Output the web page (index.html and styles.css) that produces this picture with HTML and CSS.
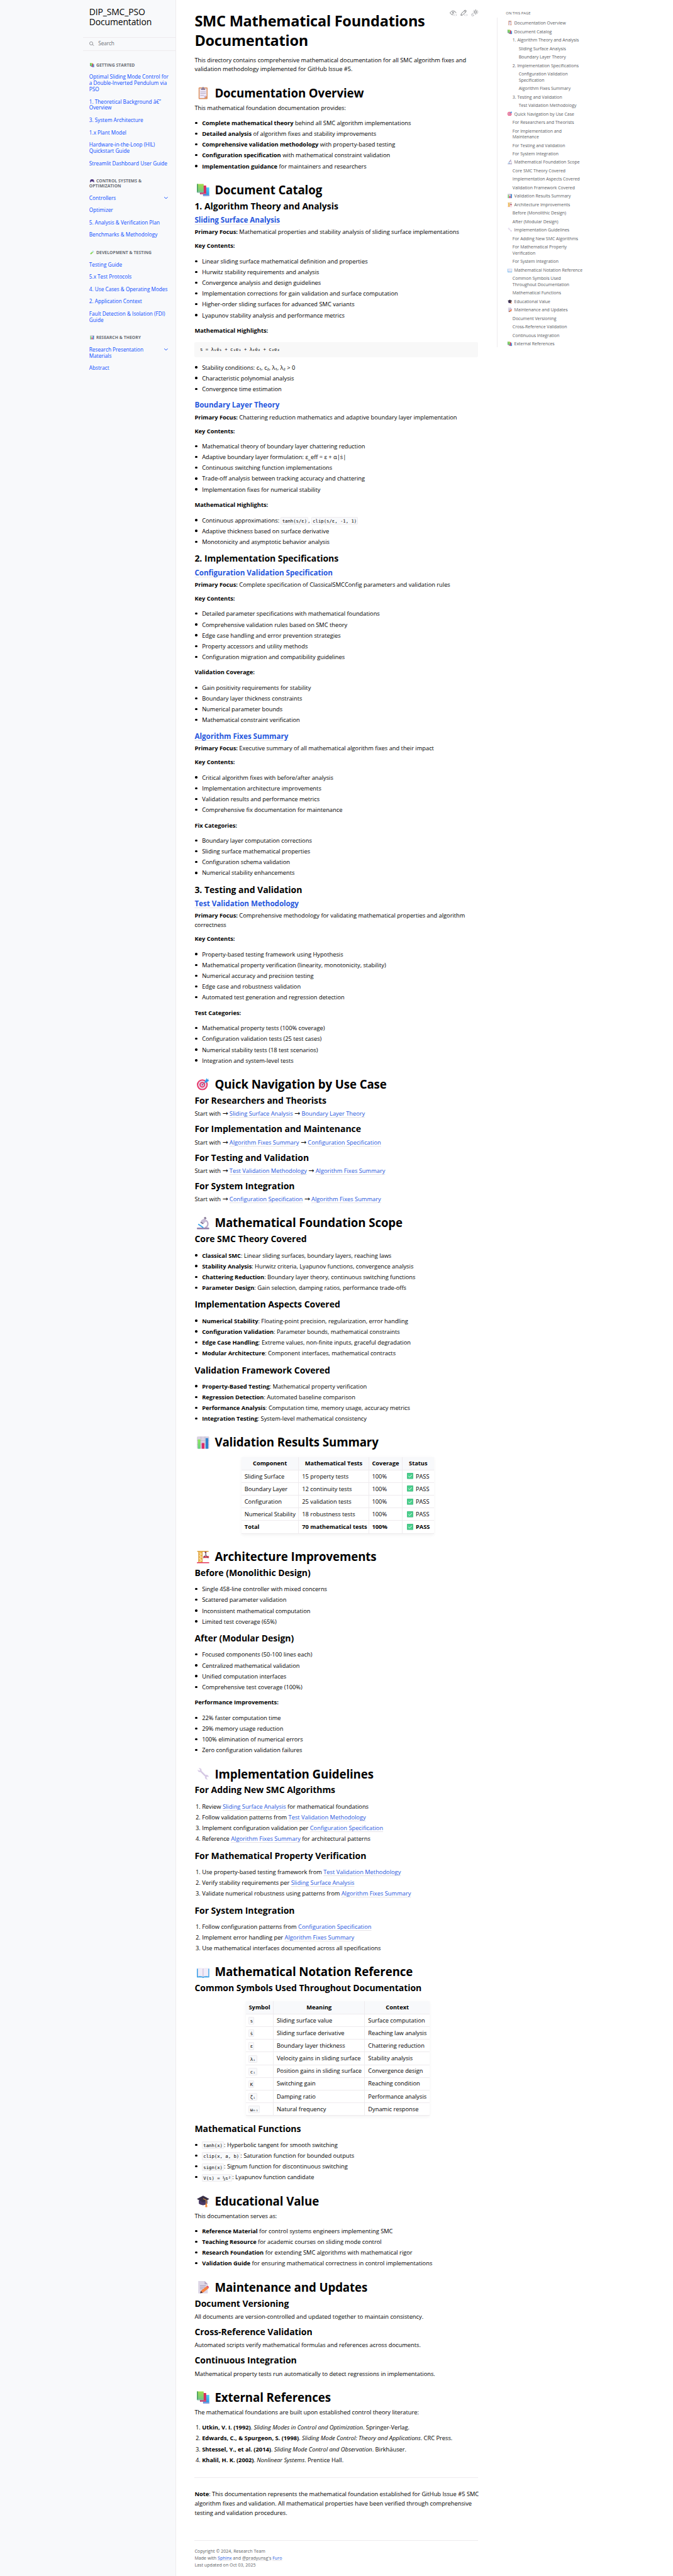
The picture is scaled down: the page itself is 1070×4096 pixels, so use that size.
FILE: index.html
```html
<!DOCTYPE html>
<html lang="en">
<head>
<meta charset="utf-8">
<title>SMC Mathematical Foundations Documentation - DIP_SMC_PSO Documentation</title>
<link rel="stylesheet" href="styles.css">
</head>
<body>
<svg class="sprite" width="0" height="0" aria-hidden="true">
  <defs>
    <linearGradient id="g-green" x1="0" y1="0" x2="0" y2="1"><stop offset="0" stop-color="#a5dc4e"/><stop offset="1" stop-color="#6cc58c"/></linearGradient>
    <linearGradient id="g-blue" x1="0" y1="0" x2="0" y2="1"><stop offset="0" stop-color="#4fd0fb"/><stop offset="1" stop-color="#2a8fe0"/></linearGradient>
    <linearGradient id="g-lime" x1="0" y1="0" x2="0" y2="1"><stop offset="0" stop-color="#8fe85a"/><stop offset="1" stop-color="#5fd07a"/></linearGradient>
  </defs>
  <symbol id="clipboard" viewBox="0 0 32 32">
    <rect x="4.500" y="1.500" width="23" height="30.500" rx="2" fill="#dd9160"/>
    <path d="M7 4h18v19l-6 6H7z" fill="#eee8f7"/><path d="M25 23l-6 6v-6z" fill="#c5b4d6"/>
    <path d="M10.500 4.500h11V7a1 1 0 0 1-1 1h-9a1 1 0 0 1-1-1zM13.500 5V3a2.500 2.500 0 0 1 5 0v2z" fill="#8d7d99"/>
    <path d="M9 13h14M9 17h14M9 22h9" stroke="#a899b8" stroke-width="1.200"/>
  </symbol>
  <symbol id="books" viewBox="0 -1 32 32">
    <rect x="16" y="8.500" width="16" height="22.500" rx="1" fill="url(#g-blue)"/><path d="M15.500 28.500H32V31H17z" fill="#6a6fd0"/><path d="M17 29.500h15" stroke="#e8e4f8" stroke-width="1"/>
    <rect x="8" y="4" width="16" height="22.500" rx="1" fill="#dc2a60"/><path d="M7.500 24H24v2.500H9z" fill="#a51f60"/><path d="M9 24.800h15" stroke="#f3dcea" stroke-width="1"/>
    <rect x="0" y="0" width="17.500" height="22" rx="1" fill="url(#g-green)"/><path d="M0 0h3v20H0z" fill="#4fa564"/><path d="M.5 19.800h17V22H1z" fill="#3f8d72"/><path d="M1.500 20.500h16" stroke="#e6f2ea" stroke-width="1"/>
  </symbol>
  <symbol id="dart" viewBox="0 0 32 32">
    <circle cx="14" cy="17.500" r="14" fill="#e83c6c"/><circle cx="14" cy="17.500" r="10.600" fill="#e8dff2"/><circle cx="14" cy="17.500" r="7.500" fill="#e83c6c"/><circle cx="14" cy="17.500" r="4.300" fill="#ddd2ea"/><circle cx="14" cy="17.500" r="1.800" fill="#b02a5c"/>
    <path d="M14 17.500L24 8" stroke="#7a6a9c" stroke-width="1.600"/><path d="M19.500 9.500L25.500.5l2 4 4.500 2-8.500 6.500z" fill="#3aa5ee"/><path d="M20 12.500L30 3" stroke="#2374c4" stroke-width="1.200"/>
  </symbol>
  <symbol id="microscope" viewBox="0 0 32 32">
    <path d="M22 8.500c9 4 8 16-1 19" fill="none" stroke="#bcaecb" stroke-width="3.800"/>
    <rect x="0" y="27.500" width="32" height="4.500" rx="2" fill="#9280ab"/>
    <path d="M3.500 18.500l13 9" stroke="#39a5ee" stroke-width="3"/>
    <path d="M12 8l9-5 4 7.500-9 7.500c-5 0-8-4-4-10z" fill="#c9bdd6"/><path d="M9.500 13.500l7 4" stroke="#75668a" stroke-width="2.400"/><path d="M18 1.500l4-2 3 4.500-4.500 2z" fill="#877a97"/>
  </symbol>
  <symbol id="chart" viewBox="0 0 32 32">
    <rect width="32" height="32" rx="3" fill="#d9d2e2"/><path d="M0 10.500h32M0 21h32M10.500 0v32M21 0v32" stroke="#b7aec2" stroke-width=".8"/>
    <rect x="2.500" y="7.500" width="6.500" height="24.500" rx="1" fill="url(#g-lime)"/><rect x="12.500" y="17" width="6.800" height="15" rx="1" fill="#dc2a68"/><rect x="22.500" y="4.500" width="6.800" height="27.500" rx="1" fill="#2f83cf"/>
  </symbol>
  <symbol id="crane" viewBox="0 0 32 32">
    <rect x="0" y="29" width="32" height="3" rx="1" fill="#e63a5c"/>
    <path d="M1 1.300h29" stroke="#dba23c" stroke-width="2.400"/><path d="M4 2h10.500v27H4z" fill="#f0b94c"/>
    <path d="M6 5l6.500 3L6 12l6.500 4L6 20l6.500 4L6 28" fill="none" stroke="#fff2d0" stroke-width="1.600"/><path d="M4.800 2v27M13.700 2v27" stroke="#c98a30" stroke-width="1.200"/>
    <path d="M20 2h5l-1 4h-3z" fill="#8c3a52"/><path d="M16.500 13.500h14.500v4.500H16.500z" fill="#de3f51"/><path d="M23 5v4.500l-6 9M23 9.500l6 9" stroke="#4b4258" stroke-width="1.600" fill="none"/>
  </symbol>
  <symbol id="wrench" viewBox="0 0 32 32">
    <path d="M2 5c0 5 4 7 8 5.500l11 11c-1.500 5 1.500 9 7 8.500l-3.500-4.500 2-3 4 1c0-4-4-7-8-5.500L12 7.500C13 3 9.500-.5 4.500.5l4 4-1.800 3z" fill="#d8cbe6"/><path d="M10 10.500l11 11" stroke="#bfb0d2" stroke-width="1.200"/>
  </symbol>
  <symbol id="book" viewBox="0 0 32 32">
    <path d="M0 7h32v22.500H18.500L16 31l-2.500-1.500H0z" fill="#3aa0e6"/><path d="M2.500 5.500C8 4.500 13 5 16 6.500c3-1.500 8-2 13.500-1V27c-5-1-10-1-13.500.8C12.500 26 7.500 26 2.500 27z" fill="#f1ecf8"/><path d="M16 6.500v21" stroke="#c2b2d4" stroke-width="1.600"/>
  </symbol>
  <symbol id="cap" viewBox="0 0 32 32">
    <path d="M5 14h22v8c-4 6-18 6-22 0z" fill="#4a3a66"/><path d="M0 10.500L16 2l16 8.500-16 9z" fill="#393048"/><path d="M16 9.500l8 4V23" fill="none" stroke="#f0a33c" stroke-width="1.700"/><path d="M22.500 22h3l1.500 9c-2 1.300-4 1.300-5.500 0z" fill="#f48a3c"/>
  </symbol>
  <symbol id="memo" viewBox="0 0 32 32">
    <path d="M3.500 0H20l8 8v24H3.500z" fill="#ddd6e6"/><path d="M20 0l8 8h-8z" fill="#b5a7c4"/><path d="M8 12h15M8 16h13M8 20h8" stroke="#a494b5" stroke-width="1.400"/>
    <path d="M10.500 25L25 13.500l5 5L15 30.500z" fill="#f88240"/><path d="M25 13.500l2-1.500c3 1 4 3 3.500 5l-1.500 1.500z" fill="#e2476a"/><path d="M10.500 25L8 31.500l7-1z" fill="#5a3030"/>
  </symbol>
  <symbol id="check" viewBox="0 0 32 32">
    <rect width="32" height="32" rx="2.500" fill="#35ad78"/><rect x="1.500" y="1.500" width="28" height="28" rx="2" fill="#4bd08c"/><path d="M8 16.500l5.500 5.500L24 11" fill="none" stroke="#fff" stroke-width="3" stroke-linecap="round" stroke-linejoin="round"/>
  </symbol>
  <symbol id="gamepad" viewBox="0 0 32 32">
    <path d="M8 6c3-1.500 13-1.500 16 0 5 1 8 13 8 18 0 5-4 5-7 0l-3-3H10l-3 3c-3 5-7 5-7 0C0 19 3 7 8 6z" fill="#56418a"/><circle cx="9" cy="12" r="3" fill="#2d2148"/><circle cx="21" cy="17" r="3" fill="#2d2148"/><circle cx="25" cy="11.500" r="2" fill="#e05a80"/>
  </symbol>
  <symbol id="tube" viewBox="0 0 32 32">
    <path d="M3 22L22 5l6 7L10 29c-5 3-10-2-7-7z" fill="#8fdc5e"/><path d="M15 11l8-7 6 7-5 4z" fill="#c4e8f6"/><path d="M22 2.500l8 9" stroke="#9fcde0" stroke-width="3" stroke-linecap="round"/><circle cx="9" cy="23" r="1.800" fill="#4ba548"/>
  </symbol>
  <symbol id="chevron" viewBox="0 0 10 6"><path d="M.7 1l4.300 3.700L9.300 1" fill="none" stroke="currentColor" stroke-width="1.500" stroke-linecap="round"/></symbol>
</svg>

<div class="page">
<aside class="sidebar">
  <div class="sidebar-inner">
    <a class="brand">DIP_SMC_PSO<br>Documentation</a>
    <div class="search">
      <svg viewBox="0 0 16 14"><circle cx="5.800" cy="5.800" r="4.900"/><path d="M9.500 9.300l5 4"/></svg>
      <span>Search</span>
    </div>
    <nav>
      <p class="caption"><svg class="emoji"><use href="#books"/></svg>GETTING STARTED</p>
      <ul>
        <li>Optimal Sliding Mode Control for<br>a Double-Inverted Pendulum via<br>PSO</li>
        <li>1. Theoretical Background â€”<br>Overview</li>
        <li>3. System Architecture</li>
        <li>1.x Plant Model</li>
        <li>Hardware-in-the-Loop (HIL)<br>Quickstart Guide</li>
        <li>Streamlit Dashboard User Guide</li>
      </ul>
      <p class="caption"><svg class="emoji"><use href="#gamepad"/></svg>CONTROL SYSTEMS &amp;<br>OPTIMIZATION</p>
      <ul>
        <li class="has-children">Controllers<svg class="chev"><use href="#chevron"/></svg></li>
        <li>Optimizer</li>
        <li>5. Analysis &amp; Verification Plan</li>
        <li>Benchmarks &amp; Methodology</li>
      </ul>
      <p class="caption"><svg class="emoji"><use href="#tube"/></svg>DEVELOPMENT &amp; TESTING</p>
      <ul>
        <li>Testing Guide</li>
        <li>5.x Test Protocols</li>
        <li>4. Use Cases &amp; Operating Modes</li>
        <li>2. Application Context</li>
        <li>Fault Detection &amp; Isolation (FDI)<br>Guide</li>
      </ul>
      <p class="caption"><svg class="emoji"><use href="#chart"/></svg>RESEARCH &amp; THEORY</p>
      <ul>
        <li class="has-children"><span>Research Presentation<br>Materials</span><svg class="chev"><use href="#chevron"/></svg></li>
        <li>Abstract</li>
      </ul>
    </nav>
  </div>
</aside>

<main class="content">
  <div class="page-actions">
    <svg viewBox="0 0 22 20"><path d="M10 16C6 16 3 13 1 10.500c4-8 14-8 18 0"/><circle cx="10" cy="10" r="2"/><path class="thin" d="M14.500 14l-2.500 2.500 2.500 2.500M18 14l2.500 2.500L18 19"/></svg>
    <svg viewBox="0 0 22 20"><path d="M1.500 17.500l1.200-5L13 2.500c3-1 5 1 4 4L6.500 16.500zM11.500 4l4 4"/><path class="thin" d="M14.500 14l-2.500 2.500 2.500 2.500M18 14l2.500 2.500L18 19"/></svg>
    <svg viewBox="0 0 22 20"><circle cx="13.500" cy="7.500" r="3.400"/><path d="M13.500 0v2M13.500 13v2M6 7.500h2M19 7.500h2M8.200 2.200l1.400 1.400M18.800 2.200l-1.400 1.400M18.800 12.800l-1.400-1.400M8.200 12.800l1.400-1.400"/><path class="thin" d="M5 12c-6 1-4.500 8 0 7.500 2-.3 3-1.500 3.200-2.800-3 .8-4.700-2-3.200-4.700z"/></svg>
  </div>
  <article>
    <h1>SMC Mathematical Foundations<br>Documentation</h1>
    <p>This directory contains comprehensive mathematical documentation for all SMC algorithm fixes and<br>validation methodology implemented for GitHub Issue #5.</p>

    <h2><svg class="emoji"><use href="#clipboard"/></svg>Documentation Overview</h2>
    <p>This mathematical foundation documentation provides:</p>
    <ul>
      <li><b>Complete mathematical theory</b> behind all SMC algorithm implementations</li>
      <li><b>Detailed analysis</b> of algorithm fixes and stability improvements</li>
      <li><b>Comprehensive validation methodology</b> with property-based testing</li>
      <li><b>Configuration specification</b> with mathematical constraint validation</li>
      <li><b>Implementation guidance</b> for maintainers and researchers</li>
    </ul>

    <h2><svg class="emoji"><use href="#books"/></svg>Document Catalog</h2>
    <h3>1. Algorithm Theory and Analysis</h3>
    <h4><a>Sliding Surface Analysis</a></h4>
    <p><b>Primary Focus:</b> Mathematical properties and stability analysis of sliding surface implementations</p>
    <p><b>Key Contents:</b></p>
    <ul>
      <li>Linear sliding surface mathematical definition and properties</li>
      <li>Hurwitz stability requirements and analysis</li>
      <li>Convergence analysis and design guidelines</li>
      <li>Implementation corrections for gain validation and surface computation</li>
      <li>Higher-order sliding surfaces for advanced SMC variants</li>
      <li>Lyapunov stability analysis and performance metrics</li>
    </ul>
    <p><b>Mathematical Highlights:</b></p>
    <pre>s = λ₁ė₁ + c₁e₁ + λ₂ė₂ + c₂e₂</pre>
    <ul>
      <li>Stability conditions: c₁, c₂, λ₁, λ₂ &gt; 0</li>
      <li>Characteristic polynomial analysis</li>
      <li>Convergence time estimation</li>
    </ul>
    <h4><a>Boundary Layer Theory</a></h4>
    <p><b>Primary Focus:</b> Chattering reduction mathematics and adaptive boundary layer implementation</p>
    <p><b>Key Contents:</b></p>
    <ul>
      <li>Mathematical theory of boundary layer chattering reduction</li>
      <li>Adaptive boundary layer formulation: ε_eff = ε + α|ṡ|</li>
      <li>Continuous switching function implementations</li>
      <li>Trade-off analysis between tracking accuracy and chattering</li>
      <li>Implementation fixes for numerical stability</li>
    </ul>
    <p><b>Mathematical Highlights:</b></p>
    <ul>
      <li>Continuous approximations: <code>tanh(s/ε)</code>, <code>clip(s/ε, -1, 1)</code></li>
      <li>Adaptive thickness based on surface derivative</li>
      <li>Monotonicity and asymptotic behavior analysis</li>
    </ul>
    <h3>2. Implementation Specifications</h3>
    <h4><a>Configuration Validation Specification</a></h4>
    <p><b>Primary Focus:</b> Complete specification of ClassicalSMCConfig parameters and validation rules</p>
    <p><b>Key Contents:</b></p>
    <ul>
      <li>Detailed parameter specifications with mathematical foundations</li>
      <li>Comprehensive validation rules based on SMC theory</li>
      <li>Edge case handling and error prevention strategies</li>
      <li>Property accessors and utility methods</li>
      <li>Configuration migration and compatibility guidelines</li>
    </ul>
    <p><b>Validation Coverage:</b></p>
    <ul>
      <li>Gain positivity requirements for stability</li>
      <li>Boundary layer thickness constraints</li>
      <li>Numerical parameter bounds</li>
      <li>Mathematical constraint verification</li>
    </ul>
    <h4><a>Algorithm Fixes Summary</a></h4>
    <p><b>Primary Focus:</b> Executive summary of all mathematical algorithm fixes and their impact</p>
    <p><b>Key Contents:</b></p>
    <ul>
      <li>Critical algorithm fixes with before/after analysis</li>
      <li>Implementation architecture improvements</li>
      <li>Validation results and performance metrics</li>
      <li>Comprehensive fix documentation for maintenance</li>
    </ul>
    <p><b>Fix Categories:</b></p>
    <ul>
      <li>Boundary layer computation corrections</li>
      <li>Sliding surface mathematical properties</li>
      <li>Configuration schema validation</li>
      <li>Numerical stability enhancements</li>
    </ul>
    <h3>3. Testing and Validation</h3>
    <h4><a>Test Validation Methodology</a></h4>
    <p><b>Primary Focus:</b> Comprehensive methodology for validating mathematical properties and algorithm<br>correctness</p>
    <p><b>Key Contents:</b></p>
    <ul>
      <li>Property-based testing framework using Hypothesis</li>
      <li>Mathematical property verification (linearity, monotonicity, stability)</li>
      <li>Numerical accuracy and precision testing</li>
      <li>Edge case and robustness validation</li>
      <li>Automated test generation and regression detection</li>
    </ul>
    <p><b>Test Categories:</b></p>
    <ul>
      <li>Mathematical property tests (100% coverage)</li>
      <li>Configuration validation tests (25 test cases)</li>
      <li>Numerical stability tests (18 test scenarios)</li>
      <li>Integration and system-level tests</li>
    </ul>

    <h2><svg class="emoji"><use href="#dart"/></svg>Quick Navigation by Use Case</h2>
    <h3>For Researchers and Theorists</h3>
    <p>Start with <i class="arr">→</i> <a>Sliding Surface Analysis</a> <i class="arr">→</i> <a>Boundary Layer Theory</a></p>
    <h3>For Implementation and Maintenance</h3>
    <p>Start with <i class="arr">→</i> <a>Algorithm Fixes Summary</a> <i class="arr">→</i> <a>Configuration Specification</a></p>
    <h3>For Testing and Validation</h3>
    <p>Start with <i class="arr">→</i> <a>Test Validation Methodology</a> <i class="arr">→</i> <a>Algorithm Fixes Summary</a></p>
    <h3>For System Integration</h3>
    <p>Start with <i class="arr">→</i> <a>Configuration Specification</a> <i class="arr">→</i> <a>Algorithm Fixes Summary</a></p>

    <h2><svg class="emoji"><use href="#microscope"/></svg>Mathematical Foundation Scope</h2>
    <h3>Core SMC Theory Covered</h3>
    <ul>
      <li><b>Classical SMC</b>: Linear sliding surfaces, boundary layers, reaching laws</li>
      <li><b>Stability Analysis</b>: Hurwitz criteria, Lyapunov functions, convergence analysis</li>
      <li><b>Chattering Reduction</b>: Boundary layer theory, continuous switching functions</li>
      <li><b>Parameter Design</b>: Gain selection, damping ratios, performance trade-offs</li>
    </ul>
    <h3>Implementation Aspects Covered</h3>
    <ul>
      <li><b>Numerical Stability</b>: Floating-point precision, regularization, error handling</li>
      <li><b>Configuration Validation</b>: Parameter bounds, mathematical constraints</li>
      <li><b>Edge Case Handling</b>: Extreme values, non-finite inputs, graceful degradation</li>
      <li><b>Modular Architecture</b>: Component interfaces, mathematical contracts</li>
    </ul>
    <h3>Validation Framework Covered</h3>
    <ul>
      <li><b>Property-Based Testing</b>: Mathematical property verification</li>
      <li><b>Regression Detection</b>: Automated baseline comparison</li>
      <li><b>Performance Analysis</b>: Computation time, memory usage, accuracy metrics</li>
      <li><b>Integration Testing</b>: System-level mathematical consistency</li>
    </ul>

    <h2><svg class="emoji"><use href="#chart"/></svg>Validation Results Summary</h2>
    <div class="table-wrapper">
      <table class="results">
        <colgroup><col><col><col><col></colgroup>
        <thead><tr><th>Component</th><th>Mathematical Tests</th><th>Coverage</th><th>Status</th></tr></thead>
        <tbody>
          <tr><td>Sliding Surface</td><td>15 property tests</td><td>100%</td><td><svg class="emoji"><use href="#check"/></svg>PASS</td></tr>
          <tr><td>Boundary Layer</td><td>12 continuity tests</td><td>100%</td><td><svg class="emoji"><use href="#check"/></svg>PASS</td></tr>
          <tr><td>Configuration</td><td>25 validation tests</td><td>100%</td><td><svg class="emoji"><use href="#check"/></svg>PASS</td></tr>
          <tr><td>Numerical Stability</td><td>18 robustness tests</td><td>100%</td><td><svg class="emoji"><use href="#check"/></svg>PASS</td></tr>
          <tr><td><b>Total</b></td><td><b>70 mathematical tests</b></td><td><b>100%</b></td><td><svg class="emoji"><use href="#check"/></svg><b>PASS</b></td></tr>
        </tbody>
      </table>
    </div>

    <h2><svg class="emoji"><use href="#crane"/></svg>Architecture Improvements</h2>
    <h3>Before (Monolithic Design)</h3>
    <ul>
      <li>Single 458-line controller with mixed concerns</li>
      <li>Scattered parameter validation</li>
      <li>Inconsistent mathematical computation</li>
      <li>Limited test coverage (65%)</li>
    </ul>
    <h3>After (Modular Design)</h3>
    <ul>
      <li>Focused components (50-100 lines each)</li>
      <li>Centralized mathematical validation</li>
      <li>Unified computation interfaces</li>
      <li>Comprehensive test coverage (100%)</li>
    </ul>
    <p><b>Performance Improvements:</b></p>
    <ul>
      <li>22% faster computation time</li>
      <li>29% memory usage reduction</li>
      <li>100% elimination of numerical errors</li>
      <li>Zero configuration validation failures</li>
    </ul>

    <h2><svg class="emoji"><use href="#wrench"/></svg>Implementation Guidelines</h2>
    <h3>For Adding New SMC Algorithms</h3>
    <ol>
      <li>Review <a>Sliding Surface Analysis</a> for mathematical foundations</li>
      <li>Follow validation patterns from <a>Test Validation Methodology</a></li>
      <li>Implement configuration validation per <a>Configuration Specification</a></li>
      <li>Reference <a>Algorithm Fixes Summary</a> for architectural patterns</li>
    </ol>
    <h3>For Mathematical Property Verification</h3>
    <ol>
      <li>Use property-based testing framework from <a>Test Validation Methodology</a></li>
      <li>Verify stability requirements per <a>Sliding Surface Analysis</a></li>
      <li>Validate numerical robustness using patterns from <a>Algorithm Fixes Summary</a></li>
    </ol>
    <h3>For System Integration</h3>
    <ol>
      <li>Follow configuration patterns from <a>Configuration Specification</a></li>
      <li>Implement error handling per <a>Algorithm Fixes Summary</a></li>
      <li>Use mathematical interfaces documented across all specifications</li>
    </ol>

    <h2><svg class="emoji"><use href="#book"/></svg>Mathematical Notation Reference</h2>
    <h3>Common Symbols Used Throughout Documentation</h3>
    <div class="table-wrapper tall">
      <table class="symbols">
        <colgroup><col><col><col></colgroup>
        <thead><tr><th>Symbol</th><th>Meaning</th><th>Context</th></tr></thead>
        <tbody>
          <tr><td><code>s</code></td><td>Sliding surface value</td><td>Surface computation</td></tr>
          <tr><td><code>ṡ</code></td><td>Sliding surface derivative</td><td>Reaching law analysis</td></tr>
          <tr><td><code>ε</code></td><td>Boundary layer thickness</td><td>Chattering reduction</td></tr>
          <tr><td><code>λᵢ</code></td><td>Velocity gains in sliding surface</td><td>Stability analysis</td></tr>
          <tr><td><code>cᵢ</code></td><td>Position gains in sliding surface</td><td>Convergence design</td></tr>
          <tr><td><code>K</code></td><td>Switching gain</td><td>Reaching condition</td></tr>
          <tr><td><code>ζᵢ</code></td><td>Damping ratio</td><td>Performance analysis</td></tr>
          <tr><td><code>ωₙᵢ</code></td><td>Natural frequency</td><td>Dynamic response</td></tr>
        </tbody>
      </table>
    </div>
    <h3>Mathematical Functions</h3>
    <ul>
      <li><code>tanh(x)</code>: Hyperbolic tangent for smooth switching</li>
      <li><code>clip(x, a, b)</code>: Saturation function for bounded outputs</li>
      <li><code>sign(x)</code>: Signum function for discontinuous switching</li>
      <li><code>V(s) = ½s²</code>: Lyapunov function candidate</li>
    </ul>

    <h2><svg class="emoji"><use href="#cap"/></svg>Educational Value</h2>
    <p>This documentation serves as:</p>
    <ul>
      <li><b>Reference Material</b> for control systems engineers implementing SMC</li>
      <li><b>Teaching Resource</b> for academic courses on sliding mode control</li>
      <li><b>Research Foundation</b> for extending SMC algorithms with mathematical rigor</li>
      <li><b>Validation Guide</b> for ensuring mathematical correctness in control implementations</li>
    </ul>

    <h2><svg class="emoji"><use href="#memo"/></svg>Maintenance and Updates</h2>
    <h3>Document Versioning</h3>
    <p>All documents are version-controlled and updated together to maintain consistency.</p>
    <h3>Cross-Reference Validation</h3>
    <p>Automated scripts verify mathematical formulas and references across documents.</p>
    <h3>Continuous Integration</h3>
    <p>Mathematical property tests run automatically to detect regressions in implementations.</p>

    <h2><svg class="emoji"><use href="#books"/></svg>External References</h2>
    <p>The mathematical foundations are built upon established control theory literature:</p>
    <ol>
      <li><b>Utkin, V. I. (1992)</b>. <em>Sliding Modes in Control and Optimization</em>. Springer-Verlag.</li>
      <li><b>Edwards, C., &amp; Spurgeon, S. (1998)</b>. <em>Sliding Mode Control: Theory and Applications</em>. CRC Press.</li>
      <li><b>Shtessel, Y., et al. (2014)</b>. <em>Sliding Mode Control and Observation</em>. Birkhäuser.</li>
      <li><b>Khalil, H. K. (2002)</b>. <em>Nonlinear Systems</em>. Prentice Hall.</li>
    </ol>
    <hr>
    <p><b>Note</b>: This documentation represents the mathematical foundation established for GitHub Issue #5 SMC<br>algorithm fixes and validation. All mathematical properties have been verified through comprehensive<br>testing and validation procedures.</p>
  </article>
  <footer>
    <div>Copyright © 2024, Research Team</div>
    <div>Made with <a>Sphinx</a> and <a class="muted">@pradyunsg's</a> <a>Furo</a></div>
    <div>Last updated on Oct 03, 2025</div>
  </footer>
</main>

<aside class="toc">
  <div class="toc-title">ON THIS PAGE</div>
  <ul class="toc-tree">
    <li><svg class="emoji"><use href="#clipboard"/></svg>Documentation Overview</li>
    <li><svg class="emoji"><use href="#books"/></svg>Document Catalog</li>
    <li class="l2">1. Algorithm Theory and Analysis</li>
    <li class="l3">Sliding Surface Analysis</li>
    <li class="l3">Boundary Layer Theory</li>
    <li class="l2">2. Implementation Specifications</li>
    <li class="l3">Configuration Validation<br>Specification</li>
    <li class="l3">Algorithm Fixes Summary</li>
    <li class="l2">3. Testing and Validation</li>
    <li class="l3">Test Validation Methodology</li>
    <li><svg class="emoji"><use href="#dart"/></svg>Quick Navigation by Use Case</li>
    <li class="l2">For Researchers and Theorists</li>
    <li class="l2">For Implementation and<br>Maintenance</li>
    <li class="l2">For Testing and Validation</li>
    <li class="l2">For System Integration</li>
    <li><svg class="emoji"><use href="#microscope"/></svg>Mathematical Foundation Scope</li>
    <li class="l2">Core SMC Theory Covered</li>
    <li class="l2">Implementation Aspects Covered</li>
    <li class="l2">Validation Framework Covered</li>
    <li><svg class="emoji"><use href="#chart"/></svg>Validation Results Summary</li>
    <li><svg class="emoji"><use href="#crane"/></svg>Architecture Improvements</li>
    <li class="l2">Before (Monolithic Design)</li>
    <li class="l2">After (Modular Design)</li>
    <li><svg class="emoji"><use href="#wrench"/></svg>Implementation Guidelines</li>
    <li class="l2">For Adding New SMC Algorithms</li>
    <li class="l2">For Mathematical Property<br>Verification</li>
    <li class="l2">For System Integration</li>
    <li><svg class="emoji"><use href="#book"/></svg>Mathematical Notation Reference</li>
    <li class="l2">Common Symbols Used<br>Throughout Documentation</li>
    <li class="l2">Mathematical Functions</li>
    <li><svg class="emoji"><use href="#cap"/></svg>Educational Value</li>
    <li><svg class="emoji"><use href="#memo"/></svg>Maintenance and Updates</li>
    <li class="l2">Document Versioning</li>
    <li class="l2">Cross-Reference Validation</li>
    <li class="l2">Continuous Integration</li>
    <li><svg class="emoji"><use href="#books"/></svg>External References</li>
  </ul>
</aside>
</div>
</body>
</html>
```
FILE: styles.css
```css
html { font-size: 9.801px; }
* { box-sizing: border-box; }
body {
  margin: 0;
  color: #000;
  background: #fff;
  font-family: "Open Sans", "Noto Sans", "DejaVu Sans", sans-serif;
  font-size: .951rem;
  line-height: 1.5rem;
  letter-spacing: -.0015em;
  white-space: nowrap;
}
ul, ol { margin: 0; padding: 0; }
.sprite { position: absolute; }
.page { display: flex; height: 4096px; overflow: hidden; }

.emoji { display: inline-block; overflow: visible; }

/* left navigation */
.sidebar {
  flex: none;
  width: 28.57rem;
  display: flex;
  justify-content: flex-end;
  background: #f8f9fb;
  border-right: 1px solid #eeebee;
}
.sidebar-inner { width: 15rem; }
.brand {
  display: block;
  margin: 1.08rem 1rem 1.45rem;
  font-size: 1.425rem;
  line-height: 1.72rem;
  letter-spacing: -.0108em;
}
.search {
  display: flex;
  align-items: center;
  height: 2.25rem;
  padding-left: 1.05rem;
  border-top: 1px solid #eeebee;
  border-bottom: 1px solid #eeebee;
  color: #6b6f76;
  font-size: .83rem;
}
.search svg { width: .85rem; height: .74rem; margin-right: .57rem; fill: none; stroke: #5a5c63; stroke-width: 1.200; }
.sidebar ul { list-style: none; color: #0a4bff; font-size: .84rem; line-height: 1rem; letter-spacing: 0; }
.sidebar li { padding: .5rem 1rem; }
.sidebar .has-children { display: flex; justify-content: space-between; align-items: flex-start; }
.chev { width: .6rem; height: .36rem; margin: .32rem .2rem 0 0; }
.caption {
  margin: 1rem 0 0;
  padding: .5rem 1rem;
  color: #6b6f76;
  font-size: .69rem;
  font-weight: 700;
  line-height: .82rem;
  letter-spacing: .012em;
}
.search + nav .caption:first-child { margin-top: 1.45rem; }
.caption .emoji { width: .7rem; height: .7rem; margin: 0 .32rem 0 .12rem; vertical-align: -.12rem; }

/* article */
.content { flex: none; width: 52rem; padding: 0 3rem; }
.page-actions { float: right; display: flex; gap: .52rem; margin-top: 1.5rem; }
.page-actions svg { width: 1.2rem; height: 1.1rem; fill: none; stroke: #3c3e44; stroke-width: 1.300; overflow: visible; }
.page-actions .thin { stroke: #85878d; stroke-width: 1; }
article { padding-top: .04rem; }
h1, h2, h3, h4 { margin: .5rem 0; font-weight: 700; }
h1 { margin: 1.75rem 0 .94rem; padding-top: .06rem; font-size: 2.4rem; line-height: 3.125rem; letter-spacing: -.0103em; }
h2 { margin-top: 1.75rem; margin-bottom: .45rem; padding-top: .05rem; font-size: 1.91rem; line-height: 2.5rem; letter-spacing: -.0059em; }
h2 + .table-wrapper { margin-top: .95rem; }
h3 { font-size: 1.43rem; line-height: 1.875rem; letter-spacing: -.0024em; }
h2 + h3 { margin-top: .45rem; }
h4 { font-size: 1.19rem; line-height: 1.5625rem; letter-spacing: -.0033em; }
h2 .emoji { width: 2.02rem; height: 2.02rem; margin: 0 .86rem 0 .385rem; vertical-align: -.32rem; }
p { margin: .5rem 0 .75rem; }
h2 + p { margin-top: .45rem; }
b { font-weight: 700; }
article a, footer a { color: #2757dd; text-decoration: underline; text-decoration-color: #e6e3e8; text-underline-offset: .2em; text-decoration-thickness: 1px; }
article ul, article ol { margin: 1rem 0; padding-left: 1.2rem; }
article ul { list-style: none; }
article li + li { margin-top: .25rem; }
article ul li::before {
  content: "";
  display: inline-block;
  width: .34rem;
  height: .34rem;
  margin: 0 .77rem 0 -1.11rem;
  border-radius: 50%;
  background: #000;
  vertical-align: .2rem;
}
.arr { font: normal 1.1rem/1 "DejaVu Sans", sans-serif; }
pre, code { font-family: "DejaVu Sans Mono", "Liberation Mono", monospace; letter-spacing: 0; font-size: .742rem; }
pre { margin: 1rem 0; padding: .625rem .875rem; border-radius: .2rem; background: #f8f8f8; line-height: 1.22rem; }
code { padding: .06rem .12rem; border: 1px solid #eeebee; border-radius: .2em; background: #f8f9fb; line-height: 1; }
hr { margin: 2rem 0 1.95rem; border: 0; border-top: 1px solid #eeebee; }

.table-wrapper { box-sizing: content-box; width: 100%; height: 12.35rem; margin: 1rem 0 .5rem; padding: .2rem .2rem .75rem; }
.table-wrapper.tall { height: 18.48rem; }
table {
  margin: 0 auto;
  table-layout: fixed;
  border-collapse: collapse;
  border-radius: .2rem;
  box-shadow: 0 .2rem .5rem rgba(0, 0, 0, .05), 0 0 .0625rem rgba(0, 0, 0, .1);
}
tr { height: 2.055rem; }
th { background: #f8f9fb; font-weight: 700; text-align: center; }
th, td { padding: 0 .5rem; border-left: 1px solid #eeebee; border-bottom: 1px solid #eeebee; line-height: 1.4rem; }
th:first-child, td:first-child { border-left: 0; }
td .emoji { width: 1.02rem; height: 1rem; margin: 0 .43rem 0 .19rem; vertical-align: -.16rem; }
.results { width: 31.2rem; }
.results col:nth-child(1) { width: 9.29rem; }
.results col:nth-child(2) { width: 11.34rem; }
.results col:nth-child(3) { width: 5.45rem; }
.symbols { width: 29.83rem; }
.symbols col:nth-child(1) { width: 4.49rem; }
.symbols col:nth-child(2) { width: 14.83rem; }

footer { margin-top: 3.67rem; padding-top: 1.1rem; border-top: 1px solid #eeebee; color: #5a5c63; font-size: .72rem; line-height: 1.125rem; letter-spacing: .005em; }
footer .muted { color: inherit; }

/* page outline */
.toc { flex: none; width: 18rem; padding-top: 1.6rem; color: #5a5c63; }
.toc-title { padding-left: 1.5rem; font-size: .6rem; line-height: 1.2rem; margin-bottom: .1rem; }
.toc-tree { list-style: none; padding-left: 1.47rem; border-left: 1px solid #eeebee; font-size: .7125rem; line-height: .975rem; letter-spacing: -.0034em; }
.toc-tree li { padding-top: .4rem; }
.toc-tree .l2 { padding-left: 1rem; }
.toc-tree .l3 { padding-left: 2rem; }
.toc-tree .emoji { width: .75rem; height: .75rem; margin: 0 .35rem 0 .18rem; vertical-align: -.13rem; }
```
